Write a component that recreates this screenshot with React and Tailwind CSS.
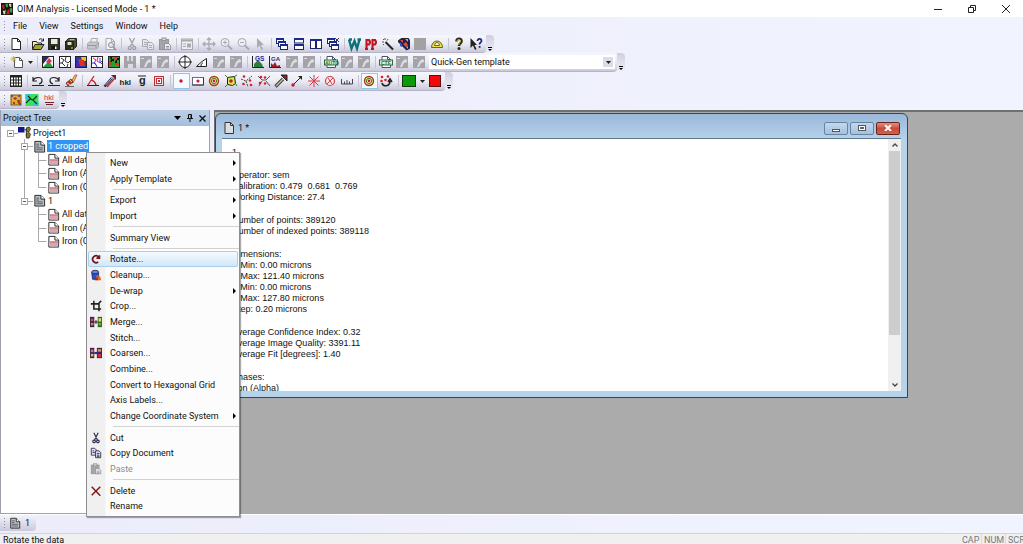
import React from "react";

const K = "#222";
const G = "#a9a9b0";

const Page = ({ c = K, f = "#fff" }) => (
  <>
    <path d="M3 1.5h5.5l3 3v8H3z" fill={f} stroke={c} />
    <path d="M8.5 1.5v3h3" fill="none" stroke={c} />
  </>
);
const Frame = ({ f, children }) => (
  <>
    <rect x="1.5" y="1.5" width="11" height="11" fill={f} stroke={K} />
    {children}
  </>
);
const GrayMap = () => (
  <>
    <rect x="1" y="1" width="12" height="12" fill="#a4a4a8" />
    <path d="M7 7l3-3 2 1v2L9 8l-2 4H5zM2 3h3v1H2z" fill="#dcdce2" />
  </>
);
const Win = ({ x, y, w = 7, h = 5 }) => (
  <>
    <rect x={x + 0.5} y={y + 0.5} width={w} height={h} fill="#fff" stroke="#1b2466" />
    <rect x={x} y={y} width={w + 1} height="2" fill="#1b2a90" />
  </>
);
const Mag = ({ plus }) => (
  <>
    <circle cx="6" cy="5.5" r="4" fill="#eef" stroke={G} />
    <path d="M9 8.5l4 4" stroke={G} strokeWidth="2" />
    <path d={plus ? "M4 5.5h4M6 3.5v4" : "M4 5.5h4"} stroke={G} />
  </>
);
const T = ({ x, y, s, c, b = "bold", children }) => (
  <text x={x} y={y} fontSize={s} fontWeight={b} fill={c} fontFamily="Liberation Sans, sans-serif">
    {children}
  </text>
);
const Dots = ({ p, r = 1.3 }) => p.map(([x, y]) => <circle key={x + "-" + y} cx={x} cy={y} r={r} fill="#d8202c" />);

const ICONS = {
  new: <Page />,
  page: <Page f="#dcdfe2" c="#333" />,
  open: (
    <>
      <path d="M1.500 12V4.500h4l1 1.500h4v2" fill="#f4f0a0" stroke={K} />
      <path d="M1.500 12.500l2.500-5h9l-3 5z" fill="#a4a42c" stroke={K} />
      <path d="M8 2.500c2-1.500 3-.5 4 1M12.500 1.500v2.500h-2.500" fill="none" stroke={K} />
    </>
  ),
  save: (
    <>
      <rect x="1.500" y="1.500" width="11" height="11" fill="#33361c" stroke={K} />
      <rect x="4" y="2" width="6.500" height="5" fill="#e8e8ee" />
      <rect x="4.500" y="9" width="5.500" height="3" fill="#111" />
      <rect x="8" y="9.500" width="1.500" height="2.500" fill="#fff" />
    </>
  ),
  saveAll: (
    <>
      <path d="M4.500 1.500h8v8l-2 2h-8v-8z" fill="#4b4e20" stroke={K} />
      <rect x="1.500" y="4.500" width="8" height="8" fill="#2c2f12" stroke={K} />
      <rect x="3.500" y="5" width="4" height="3" fill="#dcdce0" />
      <path d="M5.500 2.700h5M8 10v2" stroke="#d4d4c0" />
    </>
  ),
  print: (
    <>
      <path d="M4.500 5.500l1-4h6l-1 4" fill="#f0f0f5" stroke={G} />
      <path d="M1.500 6.500l2-1.500h9v5l-2 2h-9z" fill="#c6c6cd" stroke={G} />
      <path d="M2 8.500h8v3M10 8.500l2.500-2.500" fill="none" stroke="#94949c" />
    </>
  ),
  preview: (
    <>
      <Page c={G} f="#f2f2f8" />
      <circle cx="8" cy="8" r="2.500" fill="#e4e4ea" stroke="#8f8f96" />
      <path d="M10 10l3 3" stroke="#8f8f96" strokeWidth="1.500" />
    </>
  ),
  cutGray: <path d="M4.500 1l4 8M9.500 1l-4 8M5 9.500a1.500 1.500 0 1 0-.5 3 1.500 1.500 0 0 0 .5-3zM9 9.500a1.500 1.500 0 1 1 .5 3 1.500 1.500 0 0 1-.5-3z" fill="none" stroke="#9a9aa2" strokeWidth="1.200" />,
  cut: <path d="M4.500 1l4 8M9.500 1l-4 8M5 9.500a1.500 1.500 0 1 0-.5 3 1.500 1.500 0 0 0 .5-3zM9 9.500a1.500 1.500 0 1 1 .5 3 1.500 1.500 0 0 1-.5-3z" fill="none" stroke="#26264c" strokeWidth="1.300" />,
  copyGray: (
    <>
      <path d="M1.500 2.500h4l2 2v5h-6z" fill="#e6e6ec" stroke={G} />
      <path d="M6.500 5.500h4l2 2v5h-6z" fill="#e6e6ec" stroke={G} />
      <path d="M3 5.500h3M3 7.500h3M8 8.500h3M8 10.500h3" stroke={G} />
    </>
  ),
  copy: (
    <>
      <path d="M1.500 1.500h4l2 2v6h-6z" fill="#e6e6f4" stroke="#26264c" />
      <path d="M6.500 4.500h4l2 2v6h-6z" fill="#e6e6f4" stroke="#26264c" />
      <path d="M3 4.500h2M3 6.500h3M8 7.500h3M8 9.500h3M8 11h3" stroke="#26264c" />
    </>
  ),
  paste: (
    <>
      <rect x="1.500" y="2.500" width="9" height="10" fill="#a4a4aa" stroke="#939399" />
      <rect x="4" y="1" width="4" height="2.500" fill="#d9d9de" stroke="#939399" />
      <path d="M6.500 6.500h4l2 2v4h-6z" fill="#ececf0" stroke="#939399" />
      <path d="M8 9.500h3M8 11h3" stroke="#939399" />
    </>
  ),
  props: (
    <>
      <rect x="1.500" y="2" width="11" height="10.500" fill="#ececf2" stroke={G} />
      <path d="M2 3.500h10" stroke={G} strokeWidth="2" />
      <path d="M3 7h3M3 9.500h3" stroke={G} />
      <rect x="7" y="6.500" width="4" height="4" fill={G} />
    </>
  ),
  move: <path d="M7 1v12M1 7h12M5 3l2-2 2 2M5 11l2 2 2-2M3 5L1 7l2 2M11 5l2 2-2 2" fill="none" stroke={G} strokeWidth="1.300" />,
  zoomIn: <Mag plus />,
  zoomOut: <Mag />,
  pointer: <path d="M4 1v10l2.500-2.500L8.500 13l1.500-1-2-4h3z" fill={G} />,
  cascade: (<><Win x={1} y={1} /><Win x={3} y={4} /><Win x={5} y={7} /></>),
  tileH: (<><Win x={2} y={1} w={9} h={4.500} /><Win x={2} y={7} w={9} h={5} /></>),
  tileV: (<><Win x={1} y={2} w={5} h={9} /><Win x={7} y={2} w={5} h={9} /></>),
  closeAll: (<><Win x={1} y={1} /><Win x={3} y={4} /><Win x={5} y={7} /><path d="M9 1l4 4M13 1L9 5" stroke="#334" /></>),
  w: <path d="M1 2.500l2.500 9L6.500 4l2.500 7.500 2.500-9M1 2.500h3M9.500 2.500H13" fill="none" stroke="#0e7078" strokeWidth="2.400" />,
  pp: (<><path d="M2.500 12V3H5q2 2.500 0 4.500H2.500M8.500 12V3H11q2 2.500 0 4.500H8.500M1 12h3M7 12h3" fill="none" stroke="#c01420" strokeWidth="2.100" /></>),
  wand: (<><path d="M4.500 5l7.500 7.500" stroke={K} strokeWidth="2" /><path d="M1 5h2M4 1v2M7 2L6 3.500M2 2l1 1M2 8l1-1" stroke="#555" /></>),
  cube: (
    <>
      <path d="M1.500 3.500l3-2h7l1 2v8l-3 1.500-8-8z" fill="#1a1c5c" stroke={K} />
      <path d="M3 3l3 0 0 3zM6 7l3-2 2 3-2 2z" fill="#e84b2c" />
      <path d="M8 2h3v3zM9 10l2-1v3z" fill="#e9a030" />
      <path d="M3 5l2 2v3L3 9z" fill="#2a56d8" />
    </>
  ),
  gray: <rect x="1" y="1" width="12" height="12" fill="#a2a2a4" />,
  dome: (<><path d="M1.500 10.500a5.500 6.500 0 0 1 11 0z" fill="#efe44a" stroke="#6b6414" /><path d="M4.500 8.500a2.500 3 0 0 1 5 0z" fill="#fff" stroke="#6b6414" /></>),
  help: (<><path d="M4.500 4.500c0-4 5.500-3.500 5 0-.3 1.800-2.500 1.800-2.500 4.500" fill="none" stroke="#2c2a10" strokeWidth="2.600" /><path d="M5 4c.5-2 3.500-1.800 3.500 0-.3 1.500-1.700 2-1.700 4" fill="none" stroke="#d8cf50" /><circle cx="7" cy="11.500" r="1.500" fill="#2c2a10" /></>),
  ctxHelp: (<><path d="M1.500 1v10L4 8.500 6 13l1.500-1-2-4H8z" fill={K} /><path d="M8.500 4c0-3 4-2.500 4 0 0 1.500-2 1.500-2 3.500" fill="none" stroke="#1b2a80" strokeWidth="1.700" /><rect x="9.700" y="9" width="1.800" height="1.800" fill="#1b2a80" /></>),
  newStar: (<><path d="M4.500 2.500h5l3 3v7h-8z" fill="#fff" stroke="#555" /><path d="M9.500 2.500v3h3" fill="none" stroke="#555" /><path d="M3.500 1v6M.5 4h6M1.500 2l4 4M5.500 2l-4 4" stroke="#cdbb42" /></>),
  map1: <Frame f="#f6f6fa"><path d="M2 12l6-6 4 6z" fill="#2b9a3c" /><path d="M2 2h6L2 9z" fill="#222c70" /><path d="M5 7l3-4 3 3-3 3z" fill="#d83858" /></Frame>,
  map2: <Frame f="#fff"><path d="M3 3l3 2-2 3 3 3M8 2l-1 4 3 2 2-2M9 12l1-3M2 8h2" fill="none" stroke="#333" /></Frame>,
  map3: <Frame f="#2438b8"><path d="M7 2h5v4H8z" fill="#f0c030" /><path d="M4 4l6 1 1 6H6z" fill="#e03020" /><path d="M2 9l4 3H2z" fill="#6a2090" /></Frame>,
  map4: <Frame f="#fff"><path d="M3 3l3 2-2 3 3 3M8 2l-1 4 3 2 2-2" fill="none" stroke="#d02090" /><path d="M2 8h3l2 4M10 3v4l2 2" fill="none" stroke="#3040c0" /></Frame>,
  map5: <Frame f="#28a030"><path d="M3 2h2v2h2v2H5v2H3l1-3zM10 3h2v2h-2v3H8V7z" fill="#101010" /><path d="M7 2h3v3H7zM2 7h3v3H2zM8 8h4v2H8z" fill="#d83c20" /></Frame>,
  grayDisk: (<><rect x="1" y="1" width="12" height="12" fill="#a4a4a8" /><path d="M4 1v5h2V1zM8 1v5h2V1zM5 9h5v4H5z" fill="#dadae0" /></>),
  grayMap: <GrayMap />,
  pole: (<><circle cx="7" cy="7" r="5.500" fill="#fff" stroke={K} /><path d="M7 0v14M0 7h14" stroke={K} /></>),
  triangle: <path d="M1.500 11.500h10v-8q-4 2-10 8zM6 11c0-2 1-3 2-3" fill="#fff" stroke={K} />,
  chartG: (<><path d="M1.500 1v11.500H13" fill="none" stroke={K} /><path d="M3 12V9l4-4 4 4 1 3z" fill="#28803c" /><T x={4} y={6} s={6.500} c="#222c90">GS</T></>),
  chartR: (<><path d="M1.500 1v11.500H13" fill="none" stroke={K} /><path d="M3 12V8l2 2 2-3 2 4 3-1v2z" fill="#a01c28" /><T x={3} y={6} s={6} c="#222c70">GA</T></>),
  docG: (<><Page c="#456" /><rect x="0.500" y="5" width="13" height="5" fill="#dff0da" stroke="#2f6a38" /><T x={1} y={9.700} s={5} c="#2f6a38">AUTO</T></>),
  docC: (<><Page c="#456" /><rect x="0.500" y="5" width="13" height="5" fill="#dff0da" stroke="#2f6a38" /><T x={2} y={9.700} s={5} c="#2f6a38">CTF</T></>),
  table: (<><rect x="1" y="1" width="12" height="12" fill={K} /><path d="M2 4.500h10M2 7.500h10M2 10.500h10" stroke="#fff" strokeWidth="2" /><path d="M4.500 2v10M7 2v10M9.500 2v10" stroke={K} /></>),
  undo: (<><path d="M2 6.500c2-4 9-4 9 0 0 2-1 3-3 3.500M2 3v4h4" fill="none" stroke={K} strokeWidth="1.200" /><path d="M1 11.500h12" stroke={K} /></>),
  redo: (<><path d="M12 6.500c-2-4-9-4-9 0 0 2 1 3 3 3.500M12 3v4H8" fill="none" stroke={K} strokeWidth="1.200" /><path d="M1 11.500h12" stroke={K} /></>),
  eraser: (<><path d="M7 8l4-7h2L9 9z" fill="#f0d040" stroke="#b03020" strokeWidth=".7" /><path d="M2 9l5-4 2 3-5 4z" fill="#c8302c" stroke="#401010" strokeWidth=".6" /><path d="M1 12.500h9" stroke="#666" /><path d="M3 9l3 2M6 6l2 2" stroke="#f4d860" /></>),
  angle: (<><path d="M1 11.500h12" stroke={K} /><path d="M2 11L8 2M5 6q4 1 5 5" fill="none" stroke="#c82430" strokeWidth="1.300" /></>),
  pencils: (<><path d="M1.500 12.500L9 4" stroke="#222a80" strokeWidth="2.600" /><path d="M4 13l7.500-8.500" stroke="#c83030" strokeWidth="1.500" /><path d="M2.500 11L10 3" stroke="#e0cc40" /><path d="M8 1h5v5z" fill="#702028" /></>),
  hkl: <T x={0.500} y={10.500} s={8} c={K}>hkl</T>,
  gbar: (<><T x={4} y={10} s={11} c={K}>g</T><path d="M3 2h8" stroke={K} /></>),
  target: (<><rect x="2.500" y="2.500" width="9" height="9" fill="#fbdada" stroke="#c03038" /><rect x="4.500" y="4.500" width="5" height="5" fill="#fff" stroke="#c03038" /><rect x="6" y="6" width="2" height="2" fill="#c03038" /></>),
  dot: <circle cx="7" cy="7" r="1.700" fill="#c81c2c" />,
  dotRect: (<><rect x="1.500" y="3.500" width="11" height="7.500" fill="#fff" stroke="#6a6a86" /><path d="M12.500 3.500V11h-11" fill="none" stroke="#334" /><circle cx="7" cy="7" r="1.600" fill="#c81c2c" /></>),
  bull: (<><circle cx="7" cy="7" r="4.500" fill="#f4e850" stroke="#a83820" strokeWidth="1.400" /><circle cx="7" cy="7" r="2.600" fill="#fff" stroke="#3a7a30" /><circle cx="7" cy="7" r="1.400" fill="#c81c2c" /></>),
  grain: (<><path d="M3.500 3.500l7-1 1 7-3 2-5-1z" fill="#d8e850" stroke="#222" /><path d="M1 1l2.500 2.500M13 1l-2.500 1.500M11.500 9.500L13 12M3.500 10.500L1 13" stroke="#228030" /><circle cx="7" cy="7" r="1.800" fill="#c81c2c" /></>),
  bound1: (<><path d="M1 5l5 2 6-5M6 7l2 6" fill="none" stroke="#444" strokeDasharray="2 1" /><Dots p={[[4, 2.500], [10, 6.500], [3.500, 10], [11, 11]]} /></>),
  bound3: (<><path d="M1 2l4 4H9l4-4M5 7l-3 5M9 7l4 5" fill="none" stroke="#555" /><Dots p={[[4, 3], [3, 9], [8, 9.500], [8, 3.500]]} /></>),
  arrow: (<><path d="M1.500 12.500L9 5" stroke="#222a80" strokeWidth="3.200" /><path d="M2 12l7-7" stroke="#e0cc40" strokeWidth="1.400" /><path d="M7 1h6v6z" fill="#8a2028" stroke="#222" /></>),
  vec: (<><path d="M3 11l7-7" stroke={K} /><path d="M8 2h4v4z" fill={K} /><circle cx="3" cy="11" r="1.700" fill="#c81c2c" /></>),
  star: <path d="M7 1v12M1 7h12M2.500 2.500l9 9M11.500 2.500l-9 9" stroke="#d83844" />,
  nosign: (<><circle cx="7" cy="7" r="4.500" fill="#fbe8e8" stroke="#c84450" strokeWidth="1.200" /><path d="M4 10l6-6M5 4l4 6" stroke="#c84450" /></>),
  ruler: <path d="M1.500 5v5h11V5M4.500 10V7.500M7 10V6M9.500 10V7.500" fill="none" stroke="#445" />,
  swap: (<><path d="M3 9c1 4 8 4 8-2M9 8l2-3 2 3" fill="none" stroke={K} strokeWidth="1.600" /><Dots p={[[3, 3], [9, 2.500], [2.500, 7], [6.500, 6]]} /></>),
  stitch: (<><rect x="2" y="2" width="10" height="10" fill="#e8a838" stroke="#7a5a18" /><path d="M4 5l3-1 1 2-2 1zM8 7h3v3l-2 1zM4 9h2v2H4z" fill="#a04020" /><path d="M2 3h2M10 2v2M12 11h-2" stroke="#304898" strokeWidth="1.500" /></>),
  cell: (<><rect x="0.500" y="1" width="13" height="12" fill="#3be05c" /><path d="M.5 1h5L4 6H.5zM9 9h4.500v4H9z" fill="#2cc8d8" /><path d="M1 10l4-4 3 1 4 4M8 7l4-4M3 3l3 3" fill="none" stroke="#103818" strokeWidth="1.200" /></>),
  hklList: (<><T x={2} y={7} s={7.500} b="normal" c="#c83040">hkl</T><path d="M3 9.500h9M4 11.500h7" stroke="#702028" /></>),
  rotate: <path d="M9.500 10.500a4 4 0 1 1 .5-6M11 2.500V6H7.500" fill="none" stroke="#7a1414" strokeWidth="2" />,
  clean: (<><path d="M2 4h8v8H3z" fill="#2a50c8" stroke="#222a60" /><ellipse cx="6" cy="3.500" rx="4" ry="2" fill="#6a88d8" stroke="#222a60" /><path d="M8 7l4 2 1 4H7z" fill="#e06a20" /><path d="M9 9v4H5z" fill="#b02020" /></>),
  crop: <path d="M4.500 1v9.500H13M1 4.500h9.500V13M10 4l3-3" fill="none" stroke={K} strokeWidth="1.800" />,
  merge: (<><rect x="0" y="1" width="5" height="12" fill="#40204a" /><rect x="1" y="3" width="3" height="3" fill="#d84080" /><rect x="1" y="8" width="3" height="3" fill="#b0a030" /><rect x="9" y="1" width="5" height="12" fill="#3a6020" /><rect x="10" y="2.500" width="3" height="4" fill="#d8e060" /><rect x="10" y="8" width="3" height="3" fill="#60b040" /><path d="M5 7h4M7 5v4" stroke={K} strokeWidth="1.300" /></>),
  coarsen: (<><rect x="0" y="1" width="5" height="12" fill="#40204a" /><rect x="1" y="3" width="3" height="3" fill="#e07090" /><rect x="1" y="8" width="3" height="3" fill="#e8c040" /><rect x="8" y="1" width="6" height="12" fill="#3a2050" /><rect x="9" y="2.500" width="4" height="3" fill="#e09050" /><rect x="9" y="8" width="4" height="4" fill="#c83040" /><path d="M5 7h4" stroke="#2030a0" strokeWidth="2.500" /></>),
  del: <path d="M2 2l10 10.500M12 2L2 12" stroke="#7c1818" strokeWidth="1.700" />,
  docGray: (<><path d="M2 1.500h6.500l4 4v7.500H2z" fill="#b8c0c2" stroke="#222" /><path d="M8.500 1.500v4h4" fill="#fff" stroke="#222" /><path d="M3.500 4.500h3M3.500 6.500h3M3.500 8.500h7M3.500 10.500h7" stroke="#556" /></>),
  docPink: (<><path d="M2 1.500h6.500l4 4v7.500H2z" fill="#fff" stroke="#222" /><path d="M8.500 1.500v4h4" fill="#fff" stroke="#222" /><rect x="3" y="7" width="9" height="5" fill="#dca6ae" /><path d="M3 7.500h9" stroke="#b8606c" /></>),
  project: (<><rect x="0" y="1" width="7" height="6" fill="#16168c" /><path d="M7 4h3M9 4v7h2" fill="none" stroke="#333" /><path d="M9 2l3-1 1.500 2-1.500 3H9zM9 8l3-1 1.500 2-1.500 4H9z" fill="#8a7a20" stroke="#222" strokeWidth=".8" /></>),
  logo: (<><rect width="14" height="14" fill="#151515" /><path d="M1 2h3v5H2zM8 8h2v5H6z" fill="#d02020" /><path d="M5 1h3v4H6zM10 6h3v5h-2zM4 8h2v3z" fill="#30b040" /><path d="M9 1h3v4l-2-1zM2 9h3v4H3z" fill="#e8d8b0" /></>),
};

const Icon = ({ name, className = "h-3.5 w-3.5" }) => (
  <svg viewBox="0 0 14 14" className={"shrink-0 overflow-visible " + className} aria-hidden="true">
    {ICONS[name]}
  </svg>
);

const WIDTHS = {
  1: "w-4", 2: "w-[33px]", 3: "w-[49px]", 4: "w-[67px]", 5: "w-[82px]",
  6: "w-[98px]", 8: "w-[131px]", 11: "w-[182px]",
};

const Grip = () => (
  <span className="flex w-2 shrink-0 flex-col items-center justify-center gap-0.5">
    {[0, 1, 2, 3].map((i) => <span key={i} className="h-px w-px bg-[#8f8fa6]" />)}
  </span>
);
const Sep = () => <span className="mx-auto h-3 w-px shrink-0 bg-[#c3c3d2]" />;
const Group = ({ names, active = [], first }) => (
  <>
    {!first && <span className="flex w-1.5 shrink-0 items-center"><Sep /></span>}
    <div className={"flex shrink-0 items-center " + WIDTHS[names.length]}>
      {names.map((n, i) => (
        <button key={i} type="button" aria-label={n}
          className={"flex h-4 min-w-0 flex-1 items-center justify-center " + (active.includes(i) ? "bg-[#f4faff] outline outline-1 -outline-offset-1 outline-[#8cc6e8]" : "")}>
          <Icon name={n} className="h-3.5 w-3.5" />
        </button>
      ))}
    </div>
  </>
);
const Bar = ({ label, children, className = "" }) => (
  <div className={"flex items-stretch " + className}>
    <div role="toolbar" aria-label={label} className="flex items-center self-stretch rounded-r-sm border-b border-[#b4b4c6] bg-linear-to-b from-[#f6f6fc] via-[#ebebf5] to-[#c9c9da] pr-0.5">
      <Grip />
      {children}
    </div>
    <button type="button" aria-label="Toolbar options" className="flex w-2 flex-col items-center justify-end rounded-r-sm bg-linear-to-b from-[#cfcfe0] to-[#f0f0fa] pb-0.5">
      <span className="mb-px h-px w-1 bg-black" />
      <svg viewBox="0 0 4 2" className="h-0.5 w-1"><path d="M0 0h4L2 2z" /></svg>
    </button>
  </div>
);
const Down = () => <svg viewBox="0 0 5 3" className="h-[3px] w-[5px] shrink-0"><path d="M0 0h5L2.500 3z" fill="#222" /></svg>;

const MENU = [
  ["New", 1], ["Apply Template", 1], null, ["Export", 1], ["Import", 1], null, ["Summary View"], null,
  ["Rotate...", 0, "rotate"], ["Cleanup...", 0, "clean"], ["De-wrap", 1], ["Crop...", 0, "crop"], ["Merge...", 0, "merge"],
  ["Stitch..."], ["Coarsen...", 0, "coarsen"], ["Combine..."], ["Convert to Hexagonal Grid"], ["Axis Labels..."],
  ["Change Coordinate System", 1], null, ["Cut", 0, "cut"], ["Copy Document", 0, "copy"], ["Paste", 0, "paste"], null,
  ["Delete", 0, "del"], ["Rename"],
];

const ContextMenu = () => (
  <div role="menu" className="absolute left-[86px] top-[152px] z-20 flex h-[365px] w-[154px] flex-col border border-[#8e8e92] bg-[#fcfcfc] bg-linear-to-r from-[#f0f0f1] from-[18px] to-[#fcfcfc] to-[19px] py-0.5 shadow-[1px_1px_1px_#00000055]">
    {MENU.map((m, i) =>
      m === null ? (
        <span key={i} className="flex h-1.5 shrink-0 items-center pl-[26px]"><span className="h-px w-full bg-[#d2d2d4]" /></span>
      ) : (
        <button key={i} type="button" role="menuitem" disabled={m[0] === "Paste"}
          className={"mx-px flex min-h-0 flex-1 items-center rounded-xs whitespace-nowrap text-left " +
            (m[0] === "Rotate..." ? "bg-linear-to-b from-[#f6fbfe] to-[#cfe6f8] outline outline-1 -outline-offset-1 outline-[#a9cfea]" : "") +
            (m[0] === "Paste" ? " text-[#8c8c8c]" : "")}>
          <span className="flex w-[22px] shrink-0 items-center pl-0.5">{m[2] && <Icon name={m[2]} className="h-3 w-3" />}</span>
          <span className="flex-1">{m[0]}</span>
          {m[1] ? <svg viewBox="0 0 3 6" className="mr-0.5 h-1.5 w-[3px]"><path d="M0 0l3 3-3 3z" /></svg> : null}
        </button>
      )
    )}
  </div>
);

const TREE = [
  [0, "Project1", "project"], [1, "1 cropped", "docGray"], [2, "All data", "docPink", 1], [2, "Iron (Alpha)", "docPink", 1], [2, "Iron (Gamma)", "docPink", 1, 1],
  [1, "1", "docGray", 0, 1], [2, "All data", "docPink"], [2, "Iron (Alpha)", "docPink"], [2, "Iron (Gamma)", "docPink", 0, 1],
];
const BRANCH_WIDTHS = [17, 32, 46];
const Branch = ({ level, cont, last }) => {
  const w = BRANCH_WIDTHS[level];
  const x = level === 0 ? 9 : 23;
  return (
    <svg width={w} height="14" viewBox={"0 0 " + w + " 14"} className="shrink-0 overflow-visible" aria-hidden="true">
      <g stroke="#a8a8a8" fill="none">
        {level === 0 && <path d="M12 7.500h5" />}
        {level === 1 && <path d={"M26 7.500h6M23.500 0v" + (last ? 4 : 14)} />}
        {level === 2 && <path d={"M37.500 0v" + (last ? 7.500 : 14) + "M37.500 7.500h8" + (cont ? "M23.500 0v14" : "")} />}
        {level < 2 && (
          <>
            <rect x={x - 2.500} y="4.500" width="6" height="6" fill="#fff" />
            <path d={"M" + (x - 1) + " 7.500h3"} stroke="#555" />
          </>
        )}
      </g>
    </svg>
  );
};

const TEXT = [
  ["1"],
  ["Operator: sem", "Calibration: 0.479  0.681  0.769", "Working Distance: 27.4"],
  ["Number of points: 389120", "Number of indexed points: 389118"],
  ["Dimensions:", "X Min: 0.00 microns", "X Max: 121.40 microns", "Y Min: 0.00 microns", "Y Max: 127.80 microns", "Step: 0.20 microns"],
  ["Average Confidence Index: 0.32", "Average Image Quality: 3391.11", "Average Fit [degrees]: 1.40"],
  ["Phases:", "Iron (Alpha)"],
];

const winBtn = "flex h-[13px] w-6 items-center justify-center rounded-xs border ";

export default function App() {
  return (
    <div className="relative flex h-screen flex-col overflow-hidden bg-[#eeeefb] bg-linear-to-r from-[#ececfa] to-[#f1f4fe] font-[Roboto,'Noto_Sans',sans-serif] text-[9px] leading-3 text-[#111]">
      <header className="flex h-[17px] shrink-0 items-center bg-white pl-px">
        <Icon name="logo" className="h-3 w-3" />
        <h1 className="flex-1 pl-1">OIM Analysis - Licensed Mode - 1 *</h1>
        <button type="button" aria-label="Minimize" className="flex w-[34px] justify-center"><svg viewBox="0 0 8 8" className="h-2 w-2"><path d="M0 4.500h8" stroke="#222" /></svg></button>
        <button type="button" aria-label="Restore" className="flex w-[34px] justify-center"><svg viewBox="0 0 8 8" className="h-2 w-2"><path d="M.5 2.500h5v5h-5zM2.500 2V.5h5v5H6" fill="none" stroke="#222" /></svg></button>
        <button type="button" aria-label="Close" className="flex w-[34px] justify-center"><svg viewBox="0 0 8 8" className="h-2 w-2"><path d="M0 0l8 8M8 0L0 8" stroke="#222" /></svg></button>
      </header>

      <nav className="flex h-[18px] shrink-0 items-center">
        <Grip />
        <div className="flex gap-3 pl-[5px]">
          {["File", "View", "Settings", "Window", "Help"].map((m) => <button key={m} type="button">{m}</button>)}
        </div>
      </nav>

      <div className="flex shrink-0 flex-col">
        <Bar label="Standard" className="h-[18px]">
          <Group first names={["new"]} />
          <Group names={["open", "save", "saveAll"]} />
          <Group names={["print", "preview"]} />
          <Group names={["cutGray", "copyGray", "paste"]} />
          <Group names={["props"]} />
          <Group names={["move", "zoomIn", "zoomOut", "pointer"]} />
          <Group names={["cascade", "tileH", "tileV", "closeAll"]} />
          <Group names={["w", "pp", "wand", "cube", "gray", "dome"]} />
          <Group names={["help", "ctxHelp"]} />
        </Bar>
        <Bar label="Maps" className="h-[19px]">
          <button type="button" aria-label="New map" className="flex w-[26px] items-center gap-1 pl-0.5"><Icon name="newStar" /><Down /></button>
          <Group names={["map1", "map2", "map3", "map4", "map5", "grayDisk", "grayMap", "grayMap"]} />
          <Group names={["pole", "triangle", "grayMap", "grayMap"]} />
          <Group names={["chartG", "chartR", "grayMap", "grayMap"]} />
          <Group names={["docG", "grayMap", "grayMap"]} />
          <Group names={["docC", "grayMap", "grayMap"]} />
          <div className="ml-0.5 flex h-3.5 w-[186px] items-center bg-white pr-0.5">
            <select aria-label="Template" className="h-3.5 flex-1 appearance-none bg-transparent pl-0.5 text-[9px] leading-3">
              <option>Quick-Gen template</option>
            </select>
            <span className="pointer-events-none flex h-2.5 w-2.5 items-center justify-center bg-[#dcdce8]"><Down /></span>
          </div>
        </Bar>
        <Bar label="Tools" className="h-[19px]">
          <Group first names={["table"]} />
          <Group names={["undo", "redo", "eraser"]} />
          <Group names={["angle", "pencils", "hkl", "gbar", "target"]} />
          <Group names={["dot", "dotRect", "bull", "grain", "bound1", "bound3", "arrow", "vec", "star", "nosign", "ruler"]} active={[0]} />
          <Group names={["bull", "swap"]} active={[0]} />
          <span className="flex w-2 items-center"><Sep /></span>
          <button type="button" aria-label="Fill colour" className="flex items-center gap-1"><span className="h-3 w-3.5 border border-[#123a12] bg-[#0a9a0a]" /><Down /></button>
          <button type="button" aria-label="Line colour" className="ml-1 mr-0.5 h-3 w-3 border border-[#5a1010] bg-[#f40808]" />
        </Bar>
        <Bar label="Cells" className="h-[18px]">
          <Group first names={["stitch", "cell", "hklList"]} />
        </Bar>
      </div>

      <div className="flex min-h-0 flex-1 pt-px">
        <aside className="flex w-[210px] shrink-0 flex-col border-x border-b border-[#a0a0aa] bg-white">
          <div className="flex h-4 shrink-0 items-center gap-1.5 bg-linear-to-b from-[#bdd0e6] to-[#a3bddd] pl-0.5 pr-[3px]">
            <h2 className="flex-1">Project Tree</h2>
            <button type="button" aria-label="Panel menu"><svg viewBox="0 0 7 4" className="h-1 w-[7px]"><path d="M0 0h7L3.500 4z" /></svg></button>
            <button type="button" aria-label="Pin"><svg viewBox="0 0 6 8" className="h-2 w-1.5"><path d="M1.500.5h3v4h-3zM0 4.500h6M3 5v3M4 1v3" fill="none" stroke="#111" /></svg></button>
            <button type="button" aria-label="Close panel"><svg viewBox="0 0 7 7" className="h-[7px] w-[7px]"><path d="M.5.5l6 6M6.500.5l-6 6" stroke="#111" strokeWidth="1.300" /></svg></button>
          </div>
          <ul role="tree" className="flex h-[122px] flex-col">
            {TREE.map(([level, label, icon, cont, last], i) => (
              <li key={i} role="treeitem" className="flex min-h-0 flex-1 items-center whitespace-nowrap">
                <Branch level={level} cont={cont} last={last} />
                <Icon name={icon} className="h-[13px] w-[13px]" />
                <span className={"ml-px px-px " + (i === 1 ? "bg-[#3393f5] text-white" : "")}>{label}</span>
              </li>
            ))}
          </ul>
        </aside>

        <main className="relative ml-1 flex-1 overflow-hidden border-l border-t-2 border-[#707070] bg-[#ababab]">
          <section aria-label="1 *" className="absolute left-0 top-px flex h-[285px] w-[693px] flex-col rounded-t-md border border-[#2d4a5c] bg-linear-to-b from-[#9bb7d9] to-[#b6d3ec] to-[26px] px-1.5 pb-1.5">
            <div className="flex h-6 shrink-0 items-center gap-0.5 pt-1">
              <Icon name="page" />
              <h2 className="flex-1">1 *</h2>
              <button type="button" aria-label="Minimize document" className={winBtn + "border-[#6484a4] bg-linear-to-b from-[#c3d8ee] to-[#a6c0dc]"}><span className="mt-1 h-[3px] w-2 border border-[#555] bg-white" /></button>
              <button type="button" aria-label="Maximize document" className={winBtn + "border-[#6484a4] bg-linear-to-b from-[#c3d8ee] to-[#a6c0dc]"}><span className="h-1.5 w-2 border border-[#555] bg-white p-px"><span className="block h-0.5 bg-[#567]" /></span></button>
              <button type="button" aria-label="Close document" className={winBtn + "mr-px border-[#6a2420] bg-linear-to-b from-[#e09080] via-[#c84a38] to-[#d06048]"}><svg viewBox="0 0 8 6" className="h-1.5 w-2"><path d="M1 0l6 6M7 0L1 6" stroke="#fff" strokeWidth="2" /></svg></button>
            </div>
            <div className="flex min-h-0 flex-1 border-t border-[#60788c] bg-white">
              <div className="min-w-0 flex-1 overflow-hidden pl-2.5 pt-2 font-['Liberation_Sans',Arial,sans-serif] text-[9px] leading-[11px] whitespace-pre">
                {TEXT.map((p, i) => <p key={i} className="mb-3">{p.join("\n")}</p>)}
              </div>
              <div className="flex w-[13px] shrink-0 flex-col items-center justify-between bg-[#f0f0f0] py-1">
                <svg viewBox="0 0 6 4" className="h-1 w-1.5"><path d="M.5 3.500L3 1l2.500 2.500" fill="none" stroke="#444" strokeWidth="1.300" /></svg>
                <span className="mb-12 mt-1 w-[11px] flex-1 bg-[#cdcdcd]" />
                <svg viewBox="0 0 6 4" className="h-1 w-1.5"><path d="M.5.5L3 3 5.500.5" fill="none" stroke="#444" strokeWidth="1.300" /></svg>
              </div>
            </div>
          </section>
        </main>
      </div>

      <div className="flex h-[19px] shrink-0 items-stretch border-t border-white pb-0.5">
        <div className="flex items-center rounded-r-sm bg-linear-to-b from-[#f4f4fb] to-[#c9c9da] pr-1.5">
          <Grip />
          <button type="button" className="flex items-center gap-1 pl-px"><Icon name="docGray" className="h-3 w-3" />1</button>
        </div>
      </div>
      <footer className="flex h-[11px] shrink-0 border-t border-[#d4d4d8] bg-[#f0f0f0] pl-[3px] leading-[13px]">
        <span className="flex-1">Rotate the data</span>
        <div className="flex text-[#77777b]">
          <span className="w-[19px]">CAP</span>
          <span className="w-6 border-l border-[#dcdcdc] pl-0.5">NUM</span>
          <span className="w-[18px] overflow-hidden border-l border-[#dcdcdc] pl-0.5">SCRL</span>
        </div>
      </footer>
      <ContextMenu />
    </div>
  );
}
